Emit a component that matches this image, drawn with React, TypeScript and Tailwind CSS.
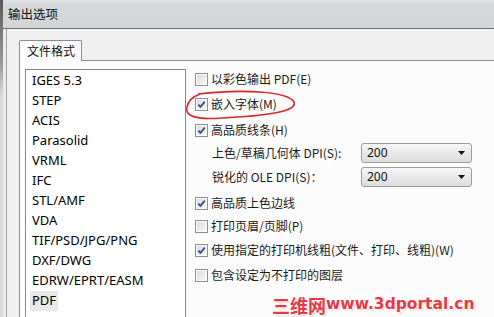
import React from "react";

const items = [
  "IGES 5.3",
  "STEP",
  "ACIS",
  "Parasolid",
  "VRML",
  "IFC",
  "STL/AMF",
  "VDA",
  "TIF/PSD/JPG/PNG",
  "DXF/DWG",
  "EDRW/EPRT/EASM",
  "PDF",
];

function Check({ checked }: { checked: boolean }) {
  return (
    <div className="w-[13px] h-[13px] shrink-0 border border-[#8e8f8f] bg-white p-[1px]">
      <div className="w-full h-full bg-gradient-to-br from-[#dcdcdc] to-[#f7f7f7] flex items-center justify-center">
        {checked && (
          <svg width="9" height="9" viewBox="0 0 9 9">
            <polyline points="1.3,4.6 3.4,6.9 7.8,1.6" fill="none" stroke="#324f8c" strokeWidth="1.8" />
          </svg>
        )}
      </div>
    </div>
  );
}

function CheckRow({ checked, label, mt }: { checked: boolean; label: string; mt: string }) {
  return (
    <div className={`h-[20px] flex items-center ${mt}`}>
      <Check checked={checked} />
      <span className="ml-[3px] text-[12px] leading-none text-[#1a1a1a] whitespace-nowrap">{label}</span>
    </div>
  );
}

function DropRow({ label, mt }: { label: string; mt: string }) {
  return (
    <div className={`h-[20px] flex items-center pl-[17px] ${mt}`}>
      <span className="w-[149px] text-[12px] leading-none text-[#1a1a1a] whitespace-nowrap">{label}</span>
      <div className="w-[111px] h-[20px] rounded-[3px] border border-[#9c9c9c] bg-gradient-to-b from-[#f7f7f7] to-[#dcdcdc] flex items-center justify-between pl-[5px] pr-[6px]">
        <span className="text-[12px] leading-none text-[#111]" style={{ fontFamily: '"Noto Sans", sans-serif' }}>200</span>
        <svg width="7" height="4" viewBox="0 0 7 4">
          <polygon points="0,0 7,0 3.5,4" fill="#111" />
        </svg>
      </div>
    </div>
  );
}

export default function App() {
  return (
    <div
      className="relative w-[494px] h-[317px] overflow-hidden flex bg-[#f0f0f0]"
      style={{ fontFamily: '"Noto Sans CJK SC", "Noto Sans", sans-serif' }}
    >
      <div className="w-[3px] h-full bg-gradient-to-b from-[#5a5a5a] via-[#9a9a9a] via-[20%] to-[#d9d9d9] to-[30%]" />
      <div className="flex-1 flex flex-col">
        <div className="h-[29px] shrink-0 border-b border-[#6c6c6c] bg-gradient-to-b from-[#e2e5e7] via-[#d4d8db] via-[15%] to-[#d2d6d9] flex items-center pl-[5px]">
          <span className="text-[12.5px] leading-none text-[#111]">输出选项</span>
        </div>
        <div className="flex-1 flex">
          <div className="w-[4px] bg-[#ebebeb] border-r border-[#a3a3a3]" />
          <div className="flex-1 flex flex-col pl-[12px] pt-[11px] bg-[#f0f0f0]">
            <div className="relative z-10 w-[63px] h-[21px] -mb-px border border-b-0 border-[#898c95] rounded-t-[2px] bg-[#fcfcfc] flex items-center pl-[7px]">
              <span className="text-[12px] leading-none text-[#111]">文件格式</span>
            </div>
            <div className="flex-1 border-t border-l border-[#898c95] bg-[#fcfcfc] flex pl-[5px] pt-[8px]">
              <div className="w-[161px] h-[270px] shrink-0 border border-[#828790] bg-white pt-[1px] pl-[4px]">
                {items.map((it) => (
                  <div key={it} className="h-[20px] flex items-center">
                    <span
                      className={`px-[2px] h-[20px] flex items-center text-[13px] text-black whitespace-nowrap ${it === "PDF" ? "bg-[#e9e9e9]" : ""}`}
                      style={{ fontFamily: '"Noto Sans", sans-serif' }}
                    >
                      {it}
                    </span>
                  </div>
                ))}
              </div>
              <div className="ml-[9px] flex flex-col">
                <CheckRow checked={false} label="以彩色输出 PDF(E)" mt="mt-0" />
                <CheckRow checked={true} label="嵌入字体(M)" mt="mt-[5px]" />
                <CheckRow checked={true} label="高品质线条(H)" mt="mt-[6px]" />
                <DropRow label="上色/草稿几何体 DPI(S):" mt="mt-[3px]" />
                <DropRow label="锐化的 OLE DPI(S)：" mt="mt-[4px]" />
                <CheckRow checked={true} label="高品质上色边线" mt="mt-[6px]" />
                <CheckRow checked={false} label="打印页眉/页脚(P)" mt="mt-[3px]" />
                <CheckRow checked={true} label="使用指定的打印机线粗(文件、打印、线粗)(W)" mt="mt-[4px]" />
                <CheckRow checked={false} label="包含设定为不打印的图层" mt="mt-[5px]" />
              </div>
            </div>
          </div>
        </div>
      </div>

      <svg className="absolute left-0 top-0 pointer-events-none" width="494" height="317">
        <path
          d="M 198 94 C 240 89, 288 91, 294 102 C 298 112, 262 116, 222 118 C 196 120, 184 116, 187 107 C 188 101, 192 97, 200 94"
          fill="none"
          stroke="#d9262b"
          strokeWidth="1.6"
        />
      </svg>

      <div
        className="absolute left-[272px] top-[296px] flex items-center text-[#e43a45] font-bold leading-none whitespace-nowrap [text-shadow:-1px_0_#fff,1px_0_#fff,0_-1px_#fff,0_1px_#fff,1px_1px_2px_#f3a0a6]"
      >
        <span className="text-[18px]">三维网</span>
        <span className="text-[15.5px]" style={{ fontFamily: '"DejaVu Sans", sans-serif' }}>www.3dportal.cn</span>
      </div>
    </div>
  );
}
